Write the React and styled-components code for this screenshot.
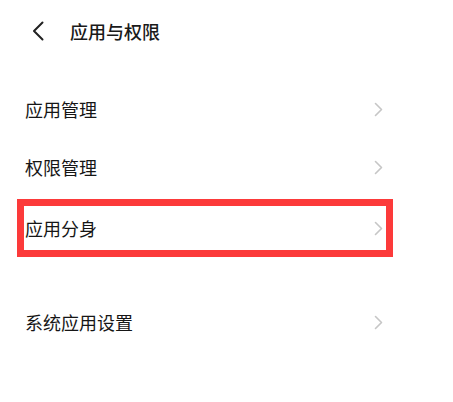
import React from "react";
import styled, { createGlobalStyle } from "styled-components";

const Global = createGlobalStyle`
  html, body { margin: 0; padding: 0; background: #ffffff; }
  body { font-family: "Noto Sans CJK SC", "Noto Sans", sans-serif; }
`;

const Page = styled.div`
  width: 453px;
  height: 402px;
  background: #ffffff;
  display: flex;
  flex-direction: column;
`;

const Header = styled.header`
  height: 62px;
  display: flex;
  align-items: center;
  padding-left: 32px;
  gap: 26px;
`;

const Title = styled.h1`
  margin: 0;
  font-size: 18px;
  font-weight: 500;
  color: #1a1a1a;
  line-height: 1;
`;

const List = styled.div`
  display: flex;
  flex-direction: column;
  padding-top: 18px;
`;

const Row = styled.div`
  box-sizing: border-box;
  height: 58px;
  margin: ${(p) => p.$top || 0}px 60px 0 17px;
  display: flex;
  align-items: center;
  justify-content: space-between;
  padding: 0 ${(p) => (p.$highlight ? 3 : 10)}px 0 ${(p) => (p.$highlight ? 1 : 8)}px;
  border: ${(p) => (p.$highlight ? "7px solid #fc3a3a" : "none")};
`;

const Label = styled.span`
  font-size: 18px;
  color: #161616;
  line-height: 1;
`;

const Back = () => (
  <svg width="12" height="20" viewBox="0 0 12 20">
    <polyline points="10.5,1.5 2,10 10.5,18.5" fill="none" stroke="#222" strokeWidth="2" strokeLinecap="round" strokeLinejoin="round" />
  </svg>
);

const Chevron = () => (
  <svg width="9" height="15" viewBox="0 0 9 15">
    <polyline points="1.5,1.5 7.5,7.5 1.5,13.5" fill="none" stroke="#c6c6c6" strokeWidth="1.6" strokeLinecap="round" strokeLinejoin="round" />
  </svg>
);

const items = [
  { label: "应用管理", top: 0 },
  { label: "权限管理", top: 0 },
  { label: "应用分身", top: 3, highlight: true },
  { label: "系统应用设置", top: 36 },
];

export default function App() {
  return (
    <Page>
      <Global />
      <Header>
        <Back />
        <Title>应用与权限</Title>
      </Header>
      <List>
        {items.map((it) => (
          <Row key={it.label} $top={it.top} $highlight={it.highlight}>
            <Label>{it.label}</Label>
            <Chevron />
          </Row>
        ))}
      </List>
    </Page>
  );
}
